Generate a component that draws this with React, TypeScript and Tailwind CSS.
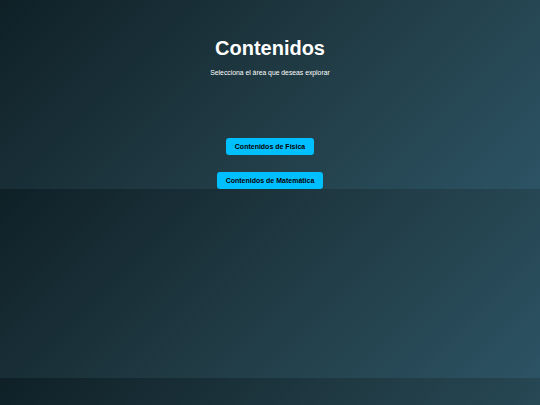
export default function App() {
  const areas = ['Contenidos de Física', 'Contenidos de Matemática'];

  return (
    <div className="min-h-[405px] w-full bg-[linear-gradient(135deg,#0f2027,#203a43,#2c5364)] bg-size-[100%_189px] bg-repeat font-['Liberation_Sans',Arial,sans-serif] text-white">
      {/* Header + area selection */}
      <div className="flex h-[189px] flex-col items-center">
        <h1 className="pt-[37px] text-[20px] leading-[23px] font-bold">Contenidos</h1>
        <p className="mt-[9px] text-[6.8px] leading-[8px]">Selecciona el área que deseas explorar</p>

        <div className="mt-[61px] flex flex-col items-center gap-[17px]">
          {areas.map((area) => (
            <button
              key={area}
              className="rounded-[3px] bg-[#00bfff] px-[9px] py-[4.5px] text-[7px] leading-[8px] font-bold text-black"
            >
              {area}
            </button>
          ))}
        </div>
      </div>
    </div>
  );
}
